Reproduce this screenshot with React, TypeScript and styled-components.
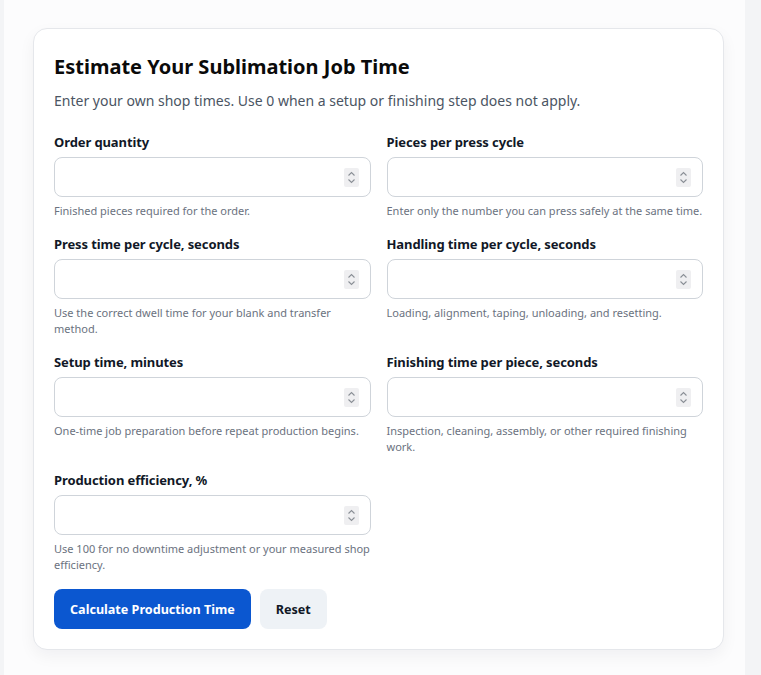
import styled, { createGlobalStyle } from "styled-components";

const GlobalStyle = createGlobalStyle`
    body {
        margin: 0;
        background: #f3f4f6;
        font-family: "Noto Sans", "Open Sans", Arial, sans-serif;
    }

    * {
        box-sizing: border-box;
    }
`;

const Page = styled.div`
    width: 741px;
    min-height: 100vh;
    margin-left: 4px;
    padding: 28px 0 0 29px;
    background: #fcfcfd;
`;

const Card = styled.section`
    width: 691px;
    padding: 24px 20px 20px;
    background: #ffffff;
    border: 1px solid #e5e7eb;
    border-radius: 14px;
    box-shadow: 0 6px 16px rgba(15, 23, 42, 0.05);
`;

const Title = styled.h2`
    margin: 0;
    font-size: 20px;
    line-height: 28px;
    font-weight: 700;
    color: #0a0a0a;
`;

const Intro = styled.p`
    margin: 9px 0 21px;
    font-size: 14px;
    line-height: 22px;
    color: #4b5563;
`;

const Grid = styled.div`
    display: grid;
    grid-template-columns: 1fr 1fr;
    column-gap: 16px;
    row-gap: 16px;
`;

const Field = styled.div`
    display: flex;
    flex-direction: column;
`;

const Label = styled.label`
    font-size: 13px;
    line-height: 18px;
    font-weight: 700;
    letter-spacing: -0.1px;
    color: #111827;
    margin-bottom: 6px;
`;

const InputWrap = styled.div`
    position: relative;
`;

const NumberInput = styled.input`
    width: 100%;
    height: 40px;
    padding: 0 12px;
    border: 1px solid #cfd4da;
    border-radius: 8px;
    background: #fff;
    font: inherit;
    font-size: 14px;
    appearance: textfield;

    &::-webkit-inner-spin-button,
    &::-webkit-outer-spin-button {
        -webkit-appearance: none;
        margin: 0;
    }
`;

// 브라우저 기본 스피너 모양을 흉내낸 작은 박스
const Spinner = styled.span`
    position: absolute;
    right: 12px;
    top: 11px;
    width: 15px;
    height: 19px;
    background: #efeff1;
    border-radius: 2px;
    display: flex;
    align-items: center;
    justify-content: center;
    pointer-events: none;
`;

const Help = styled.p`
    margin: 6px 0 0;
    font-size: 11px;
    line-height: 16px;
    color: #6b7280;
`;

const Actions = styled.div`
    display: flex;
    gap: 9px;
    margin-top: 16px;
`;

const Button = styled.button<{ $primary?: boolean }>`
    height: 40px;
    padding: 0 16px;
    border: none;
    border-radius: 8px;
    font: inherit;
    font-size: 12.6px;
    font-weight: 700;
    background: ${(props) => (props.$primary ? "#0b57d0" : "#eef2f6")};
    color: ${(props) => (props.$primary ? "#ffffff" : "#111827")};
`;

interface IField {
    id: string;
    label: string;
    help: string;
}

const fields: IField[] = [
    { id: "qty", label: "Order quantity", help: "Finished pieces required for the order." },
    { id: "pieces", label: "Pieces per press cycle", help: "Enter only the number you can press safely at the same time." },
    { id: "press", label: "Press time per cycle, seconds", help: "Use the correct dwell time for your blank and transfer method." },
    { id: "handling", label: "Handling time per cycle, seconds", help: "Loading, alignment, taping, unloading, and resetting." },
    { id: "setup", label: "Setup time, minutes", help: "One-time job preparation before repeat production begins." },
    { id: "finishing", label: "Finishing time per piece, seconds", help: "Inspection, cleaning, assembly, or other required finishing work." },
    { id: "efficiency", label: "Production efficiency, %", help: "Use 100 for no downtime adjustment or your measured shop efficiency." },
];

function SpinIcon() {
    return (
        <svg width="9" height="13" viewBox="0 0 9 13" fill="none" stroke="#8a8f96" strokeWidth="1.1">
            <path d="M1.5 4.5 L4.5 1.5 L7.5 4.5" />
            <path d="M1.5 8.5 L4.5 11.5 L7.5 8.5" />
        </svg>
    );
}

function App() {
    return (
        <>
            <GlobalStyle />
            <Page>
                <Card>
                    <Title>Estimate Your Sublimation Job Time</Title>
                    <Intro>Enter your own shop times. Use 0 when a setup or finishing step does not apply.</Intro>
                    <Grid>
                        {fields.map((f) => (
                            <Field key={f.id}>
                                <Label htmlFor={f.id}>{f.label}</Label>
                                <InputWrap>
                                    <NumberInput id={f.id} type="number" />
                                    <Spinner>
                                        <SpinIcon />
                                    </Spinner>
                                </InputWrap>
                                <Help>{f.help}</Help>
                            </Field>
                        ))}
                    </Grid>
                    <Actions>
                        <Button $primary>Calculate Production Time</Button>
                        <Button>Reset</Button>
                    </Actions>
                </Card>
            </Page>
        </>
    );
}

export default App;
